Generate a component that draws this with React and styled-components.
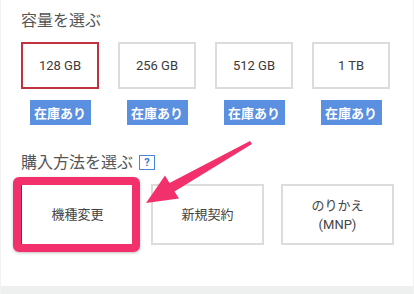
import styled, { createGlobalStyle } from "styled-components";

const GlobalStyle = createGlobalStyle`
  body {
    margin: 0;
    background: #fff;
    font-family: Roboto, "Noto Sans CJK JP", sans-serif;
  }
`;

const capacities = ["128 GB", "256 GB", "512 GB", "1 TB"];
const methods = [["機種変更"], ["新規契約"], ["のりかえ", "(MNP)"]];

export default function App() {
  return (
    <>
      <GlobalStyle />
      <Page>
        <Content>
          <Title>容量を選ぶ</Title>
          <CapacityRow>
            {capacities.map((c, i) => (
              <CapacityItem key={c}>
                <OptionBox $selected={i === 0}>{c}</OptionBox>
                <Stock>在庫あり</Stock>
              </CapacityItem>
            ))}
          </CapacityRow>
          <Title className="second">
            購入方法を選ぶ
            <Help>?</Help>
          </Title>
          <MethodRow>
            {methods.map((m, i) => (
              <MethodBox key={m[0]} $highlight={i === 0}>
                {m.map((line) => (
                  <span key={line}>{line}</span>
                ))}
                {i === 0 && <Highlight />}
              </MethodBox>
            ))}
          </MethodRow>
        </Content>
        <Footer />
        <Arrow viewBox="0 0 414 294">
          <polygon
            points="249,141 168.5,183 164,175.5 145,203 178,198.5 173.5,191.5 251,144"
            fill="#f2316c"
          />
        </Arrow>
      </Page>
    </>
  );
}

const Page = styled.div`
  position: relative;
  width: 414px;
  height: 294px;
  overflow: hidden;
  box-sizing: border-box;
  border-left: 1px solid #f2f2f2;
  border-right: 1px solid #f2f2f2;
`;

const Content = styled.div`
  padding: 8px 0 0 20px;
  height: 286px;
  box-sizing: border-box;
  .second {
    margin-top: 25px;
  }
`;

const Title = styled.div`
  display: flex;
  align-items: center;
  gap: 6px;
  font-size: 16px;
  line-height: 22px;
  color: #555;
  font-family: "Noto Sans CJK JP", sans-serif;
`;

const Help = styled.span`
  display: inline-flex;
  align-items: center;
  justify-content: center;
  width: 14px;
  height: 13px;
  border: 1px solid #4a86d8;
  color: #3a78d0;
  font-family: Roboto, sans-serif;
  font-weight: 700;
  font-size: 11px;
  line-height: 1;
  margin-top: 2px;
`;

const CapacityRow = styled.div`
  display: flex;
  gap: 19px;
  margin-top: 12px;
`;

const CapacityItem = styled.div`
  display: flex;
  flex-direction: column;
  align-items: center;
  gap: 11px;
`;

const OptionBox = styled.div`
  width: 78px;
  height: 47px;
  box-sizing: border-box;
  border: 2px solid ${(p) => (p.$selected ? "#c0323f" : "#dcdcdc")};
  display: flex;
  align-items: center;
  justify-content: center;
  font-size: 13px;
  color: #3a3a3a;
  font-family: Roboto, sans-serif;
`;

const Stock = styled.div`
  width: 61px;
  height: 25px;
  background: #5b8fdf;
  color: #fff;
  font-size: 13px;
  font-weight: 700;
  display: flex;
  align-items: center;
  justify-content: center;
  font-family: "Noto Sans CJK JP", sans-serif;
`;

const MethodRow = styled.div`
  display: grid;
  grid-template-columns: repeat(3, 113px);
  gap: 17px;
  margin-top: 12px;
`;

const MethodBox = styled.div`
  position: relative;
  height: 61px;
  box-sizing: border-box;
  border: ${(p) => (p.$highlight ? "1px solid #6e3342" : "2px solid #dcdcdc")};
  display: flex;
  flex-direction: column;
  align-items: center;
  justify-content: center;
  font-size: 13px;
  line-height: 19px;
  color: #444;
`;

const Highlight = styled.div`
  position: absolute;
  top: -8px;
  left: -9px;
  right: -7px;
  bottom: -8px;
  border: 8px solid #f2316c;
  border-radius: 6px;
  box-shadow: 0 1px 3px rgba(0, 0, 0, 0.25);
  pointer-events: none;
`;

const Footer = styled.div`
  height: 8px;
  margin-left: -1px;
  margin-right: -1px;
  background: #eeefef;
`;

const Arrow = styled.svg`
  position: absolute;
  left: 0;
  top: 0;
  width: 414px;
  height: 294px;
  pointer-events: none;
`;
